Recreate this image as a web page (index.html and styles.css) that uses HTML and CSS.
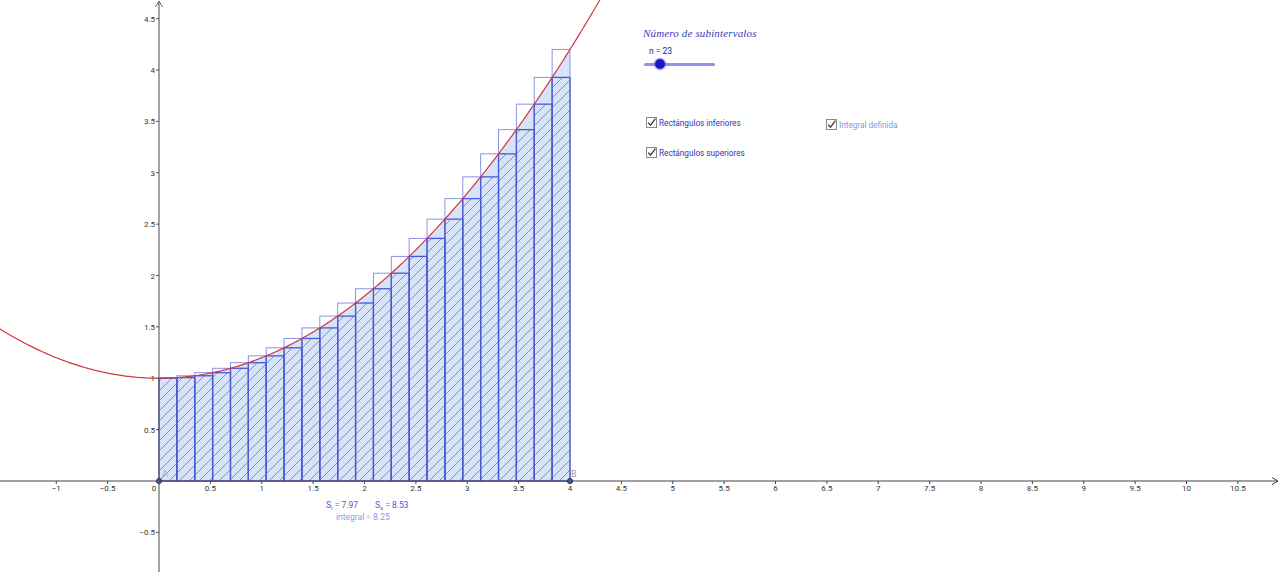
FILE: index.html
```html
<!DOCTYPE html>
<html lang="es">
<head>
    <meta charset="UTF-8">
    <title>Sumas de Riemann</title>
    <link rel="stylesheet" href="styles.css">
</head>
<body>
    <div class="view">
        <svg id="graph" class="graph" width="1280" height="572" viewBox="0 0 1280 572"></svg>

        <div class="caption">Número de subintervalos</div>

        <div class="slider">
            <div class="slider-value">n = 23</div>
            <div class="slider-track">
                <span class="slider-knob"></span>
            </div>
        </div>

        <label class="check check-inf">
            <svg class="box" width="11" height="11" viewBox="0 0 11 11">
                <rect x="0.5" y="0.5" width="10" height="10" fill="#fff" stroke="#8a8a8a"/>
                <path d="M2.2,5.6 L4.5,8.2 L9.4,1.6" fill="none" stroke="#3a3a3a" stroke-width="1.3"/>
            </svg>
            <span class="label">Rectángulos inferiores</span>
        </label>

        <label class="check check-sup">
            <svg class="box" width="11" height="11" viewBox="0 0 11 11">
                <rect x="0.5" y="0.5" width="10" height="10" fill="#fff" stroke="#8a8a8a"/>
                <path d="M2.2,5.6 L4.5,8.2 L9.4,1.6" fill="none" stroke="#3a3a3a" stroke-width="1.3"/>
            </svg>
            <span class="label">Rectángulos superiores</span>
        </label>

        <label class="check check-int">
            <svg class="box" width="11" height="11" viewBox="0 0 11 11">
                <rect x="0.5" y="0.5" width="10" height="10" fill="#fff" stroke="#8a8a8a"/>
                <path d="M2.2,5.6 L4.5,8.2 L9.4,1.6" fill="none" stroke="#3a3a3a" stroke-width="1.3"/>
            </svg>
            <span class="label light">Integral definida</span>
        </label>
    </div>

    <script src="script.js"></script>
</body>
</html>
```

FILE: styles.css
```css
body {
    margin: 0;
    background-color: #fff;
    font-family: Roboto, "Liberation Sans", sans-serif;
}

.view {
    position: relative;
    width: 1280px;
    height: 572px;
    overflow: hidden;
    background-color: #fff;
}

.graph {
    display: block;
}

.tick-label {
    font-family: Roboto, "Liberation Sans", sans-serif;
    font-size: 8px;
    fill: #333;
}

.point-label {
    font-family: Roboto, "Liberation Sans", sans-serif;
    font-size: 9px;
}

.sum {
    font-family: Roboto, "Liberation Sans", sans-serif;
    font-size: 8.5px;
    fill: #5656d2;
}

.sum .sub {
    font-size: 6px;
}

.sum.light {
    fill: #8e9ae8;
}

.caption {
    position: absolute;
    left: 643px;
    top: 27px;
    font-family: "Liberation Serif", serif;
    font-style: italic;
    font-size: 11px;
    color: #3838c4;
    letter-spacing: 0.15px;
}

.slider {
    position: absolute;
    left: 644px;
    top: 46px;
    width: 71px;
}

.slider-value {
    font-size: 8.5px;
    color: #202088;
    margin-left: 5px;
    height: 12px;
}

.slider-track {
    position: relative;
    height: 3px;
    margin-top: 5px;
    border-radius: 2px;
    background-color: #8d93e4;
}

.slider-knob {
    position: absolute;
    left: 11px;
    top: -4px;
    width: 10px;
    height: 10px;
    border-radius: 50%;
    background-color: #1717c6;
    box-shadow: 0 0 0 1.5px rgba(110, 110, 230, 0.45);
}

.check {
    position: absolute;
    display: flex;
    align-items: center;
    gap: 2px;
    font-size: 8.2px;
    color: #2a36c2;
}

.check .box {
    display: block;
}

.check .label.light {
    color: #8a96e2;
}

.check-inf {
    left: 646px;
    top: 117px;
}

.check-sup {
    left: 646px;
    top: 147px;
}

.check-int {
    left: 826px;
    top: 119px;
}
```

FILE: script.js
```js
// origin and scale of the graphics view (px per unit)
const X0 = 159, Y0 = 481, S = 102.75;
const N = 23, A = 0, B = 4;

const f = x => 1 + x * x / 5;
const px = x => X0 + x * S;
const py = y => Y0 - y * S;
const r = v => v.toFixed(2);

const svg = document.getElementById("graph");
const dx = (B - A) / N;
let out = "";

out += `<defs>
  <pattern id="hatch" patternUnits="userSpaceOnUse" width="10" height="10">
    <path d="M-1,1 L1,-1 M0,10 L10,0 M9,11 L11,9" stroke="#6079cc" stroke-width="0.8"/>
  </pattern>
</defs>`;

// integral area
let d = `M${r(px(A))},${r(py(0))}`;
for (let i = 0; i <= 200; i++) {
    const x = A + (B - A) * i / 200;
    d += ` L${r(px(x))},${r(py(f(x)))}`;
}
d += ` L${r(px(B))},${r(py(0))} Z`;
out += `<path d="${d}" fill="#d7e3f8"/>`;

// upper rectangles
for (let i = 0; i < N; i++) {
    const x = A + i * dx, h = f(x + dx);
    out += `<rect x="${r(px(x))}" y="${r(py(h))}" width="${r(dx * S)}" height="${r(h * S)}" fill="none" stroke="#8c92e6" stroke-width="1"/>`;
}

// lower rectangles
for (let i = 0; i < N; i++) {
    const x = A + i * dx, h = f(x);
    out += `<rect x="${r(px(x))}" y="${r(py(h))}" width="${r(dx * S)}" height="${r(h * S)}" fill="url(#hatch)" stroke="#4a5ad4" stroke-width="1.3"/>`;
}

// curve
let c = "";
for (let i = 0; i <= 400; i++) {
    const x = -1.6 + 6 * i / 400;
    c += (i ? " L" : "M") + `${r(px(x))},${r(py(f(x)))}`;
}
out += `<path d="${c}" fill="none" stroke="#d0383e" stroke-width="1.2"/>`;

// axes
out += `<line x1="0" y1="${Y0}" x2="1278" y2="${Y0}" stroke="#444" stroke-width="1.2"/>`;
out += `<path d="M1272,477.5 L1278,${Y0} L1272,484.5" fill="none" stroke="#444" stroke-width="1"/>`;
out += `<line x1="${X0}" y1="572" x2="${X0}" y2="1" stroke="#666" stroke-width="1.2"/>`;
out += `<path d="M155.5,7 L${X0},1 L162.5,7" fill="none" stroke="#666" stroke-width="1"/>`;

const fmt = v => (v < 0 ? "\u2212" : "") + String(Math.abs(v));

for (let k = -2; k <= 21; k++) {
    const v = k / 2;
    if (v === 0) continue;
    const x = px(v);
    out += `<line x1="${r(x)}" y1="${Y0}" x2="${r(x)}" y2="${Y0 + 3}" stroke="#444"/>`;
    out += `<text class="tick-label" x="${r(x)}" y="491" text-anchor="middle">${fmt(v)}</text>`;
}
out += `<text class="tick-label" x="154" y="491" text-anchor="middle">0</text>`;

for (let k = -1; k <= 9; k++) {
    const v = k / 2;
    if (v === 0) continue;
    const y = py(v);
    out += `<line x1="${X0 - 3}" y1="${r(y)}" x2="${X0}" y2="${r(y)}" stroke="#555"/>`;
    out += `<text class="tick-label" x="155" y="${r(y + 3)}" text-anchor="end">${fmt(v)}</text>`;
}

// points A and B
out += `<circle cx="${px(A)}" cy="${Y0}" r="2.6" fill="#4a5680" stroke="#1f2850" stroke-width="0.8"/>`;
out += `<circle cx="${px(B)}" cy="${Y0}" r="2.6" fill="#4a5680" stroke="#1f2850" stroke-width="0.8"/>`;
out += `<text class="point-label" x="162" y="477" fill="#a3aedb">A</text>`;
out += `<text class="point-label" x="571" y="477" fill="#9a9a9a">B</text>`;

// sums
out += `<text class="sum" x="326" y="508">S<tspan class="sub" dy="2">I</tspan><tspan dy="-2"> = 7.97</tspan></text>`;
out += `<text class="sum" x="375" y="508">S<tspan class="sub" dy="2">s</tspan><tspan dy="-2"> = 8.53</tspan></text>`;
out += `<text class="sum light" x="336" y="520">integral = 8.25</text>`;

svg.innerHTML = out;
```
